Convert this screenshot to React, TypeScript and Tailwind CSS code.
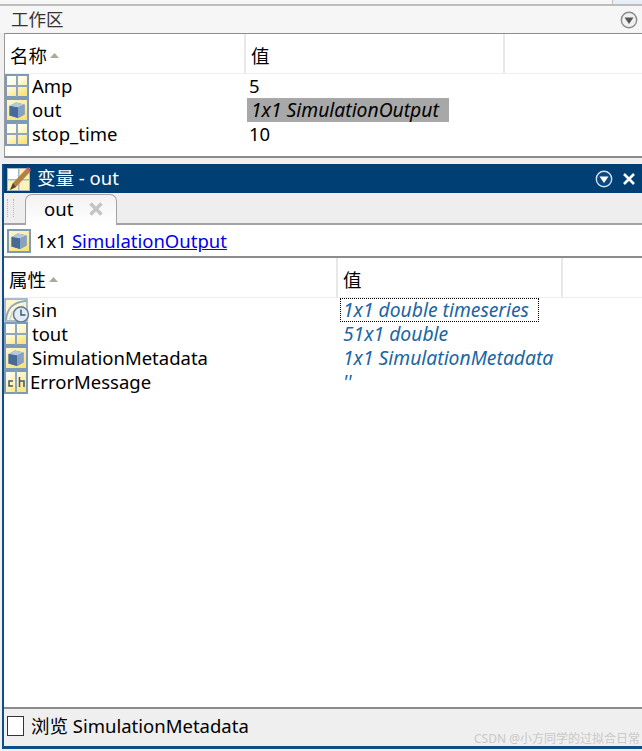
import React from "react";

const font = "font-['Noto_Sans','Noto_Sans_CJK_SC',sans-serif]";
const valueText = "text-[19.3px] italic leading-[22px]";

function GridIcon() {
  return (
    <svg width="24" height="24" viewBox="0 0 24 24" className="shrink-0">
      <defs>
        <linearGradient id="cellg" x1="0" y1="0" x2="0.6" y2="1">
          <stop offset="0" stopColor="#ffffff" />
          <stop offset="0.45" stopColor="#fffbe0" />
          <stop offset="1" stopColor="#fbe57e" />
        </linearGradient>
      </defs>
      <rect x="1" y="1" width="22" height="22" fill="url(#cellg)" stroke="#7f9ab5" strokeWidth="2" />
      <rect x="11" y="1" width="2" height="22" fill="#8fa7bd" />
      <rect x="1" y="11" width="22" height="2" fill="#8fa7bd" />
    </svg>
  );
}

function CubeIcon() {
  return (
    <svg width="24" height="24" viewBox="0 0 24 24" className="shrink-0">
      <defs>
        <linearGradient id="cubebg" x1="0" y1="0" x2="0.6" y2="1">
          <stop offset="0" stopColor="#fdf8d8" />
          <stop offset="1" stopColor="#f9e27a" />
        </linearGradient>
      </defs>
      <rect x="1" y="1" width="22" height="22" fill="url(#cubebg)" stroke="#7f9ab5" strokeWidth="2" />
      <path d="M4.5 8 L11 4.5 L19.5 6.5 L19.5 16.5 L13 20 L4.5 17.5 Z" fill="#5f83ad" />
      <path d="M4.5 8 L11 4.5 L19.5 6.5 L13 9.5 Z" fill="#b4c8de" />
      <path d="M13 9.5 L19.5 6.5 L19.5 16.5 L13 20 Z" fill="#86a1c2" />
      <path d="M4.5 8 L13 9.5 L13 20 L4.5 17.5 Z" fill="#486a96" />
    </svg>
  );
}

function TimeIcon() {
  return (
    <svg width="26" height="24" viewBox="0 0 26 24" className="shrink-0">
      <rect x="1" y="1" width="22" height="22" fill="#fdf6cf" stroke="#8fa7bd" strokeWidth="1.5" />
      <path d="M2 22 C3 10 9 4 22 3" fill="none" stroke="#8fa7bd" strokeWidth="2" />
      <path d="M6 22 C7 14 12 9 20 8" fill="none" stroke="#c9d4dc" strokeWidth="1.5" />
      <circle cx="17" cy="16.5" r="7.5" fill="#e4ebf3" stroke="#5c7c9e" strokeWidth="1.5" />
      <path d="M17 11.5 V17 H21.5" fill="none" stroke="#3d5a78" strokeWidth="1.5" />
    </svg>
  );
}

function CharIcon() {
  return (
    <svg width="24" height="24" viewBox="0 0 24 24" className="shrink-0">
      <defs>
        <linearGradient id="charg" x1="0" y1="0" x2="0.6" y2="1">
          <stop offset="0" stopColor="#ffffff" />
          <stop offset="1" stopColor="#fbe57e" />
        </linearGradient>
      </defs>
      <rect x="1" y="1" width="22" height="22" fill="url(#charg)" stroke="#7f9ab5" strokeWidth="2" />
      <rect x="11" y="1" width="2" height="22" fill="#8fa7bd" />
      <path d="M9 11 H5 V16 H9" fill="none" stroke="#44586c" strokeWidth="1.5" />
      <path d="M15.5 7 V17 M15.5 11 H20 V17" fill="none" stroke="#44586c" strokeWidth="1.5" />
    </svg>
  );
}

function PencilIcon() {
  return (
    <svg width="24" height="26" viewBox="0 0 24 26" className="shrink-0">
      <rect x="0.5" y="2.5" width="22" height="22" fill="#fdf3b8" stroke="#a9b8c6" />
      <rect x="1" y="3" width="10" height="10" fill="#ffffff" />
      <rect x="11" y="3" width="1.5" height="21" fill="#a9b8c6" />
      <rect x="1" y="13" width="21" height="1.5" fill="#a9b8c6" />
      <path d="M3 24 L6 17 L19 3 L23 6 L9 21 Z" fill="#b5813f" />
      <path d="M3 24 L6 17 L9 21 Z" fill="#5b4630" />
      <path d="M19 3 L21 1 L24 4 L23 6 Z" fill="#c0507a" />
    </svg>
  );
}

function PanelMenu({ dark }: { dark?: boolean }) {
  const c = dark ? "#ffffff" : "#555555";
  const bg = dark ? "#0b4a80" : "#f0f0f0";
  return (
    <svg width="18" height="18" viewBox="0 0 18 18" className="shrink-0">
      <circle cx="9" cy="9" r="7.7" fill={bg} stroke={dark ? "#d5e0ea" : "#8a8a8a"} strokeWidth="1.4" />
      <path d="M4.5 6.5 H13.5 L9 13 Z" fill={c} />
    </svg>
  );
}

function SortUp() {
  return (
    <svg width="9" height="5" viewBox="0 0 9 5" className="shrink-0">
      <path d="M4.5 0 L9 5 H0 Z" fill="#aaa99a" />
    </svg>
  );
}

function HeaderRow({ name, col1, col2, val }: { name: string; col1: string; col2: string; val: string }) {
  return (
    <div className="flex h-[40px] border-b border-[#eeeeee] bg-white text-black shrink-0">
      <div className={`${col1} flex items-center gap-[3px] pl-[5px] pt-[4px] border-r-2 border-[#e8e8e8] shrink-0`}>
        <span>{name}</span>
        <SortUp />
      </div>
      <div className={`${col2} flex items-center pl-[5px] pt-[4px] border-r-2 border-[#e8e8e8] shrink-0`}>
        <span>{val}</span>
      </div>
    </div>
  );
}

function Row({ icon, children }: { icon: React.ReactNode; children: React.ReactNode }) {
  return <div className="flex h-[24px] items-center leading-[22px]">{icon}{children}</div>;
}

export default function App() {
  return (
    <div className={`${font} relative w-[642px] h-[751px] overflow-hidden bg-[#f0f0f0] flex flex-col text-[18.5px] text-black`}>
      {/* top strip */}
      <div className="flex h-[6px] shrink-0 border-b-2 border-[#bdbdbd]">
        <div className="flex-1 bg-[#f6f6f6]" />
        <div className="w-[30px] bg-[#e8eef6] border-l border-[#bdbdbd]" />
      </div>

      {/* workspace */}
      <div className="flex items-center justify-between h-[27px] pl-[11px] pr-[4px] bg-[#f6f6f6] shrink-0 text-[#333333] text-[17.5px]">
        <span>工作区</span>
        <PanelMenu />
      </div>
      <div className="ml-[4px] h-[125px] shrink-0 flex flex-col bg-white border-t border-b-2 border-l border-[#8c8c8c] border-l-[#9a9a9a]">
        <HeaderRow name="名称" val="值" col1="w-[241px]" col2="w-[259px]" />
        <Row icon={<GridIcon />}>
          <span className="ml-[3px] w-[217px]">Amp</span>
          <span>5</span>
        </Row>
        <Row icon={<CubeIcon />}>
          <span className="ml-[3px] w-[215px]">out</span>
          <span className={`${valueText} h-[24px] w-[202px] bg-[#a8a8a8] pl-[4px] pt-[1px] whitespace-nowrap`}>1x1 SimulationOutput</span>
        </Row>
        <Row icon={<GridIcon />}>
          <span className="ml-[3px] w-[217px]">stop_time</span>
          <span>10</span>
        </Row>
      </div>

      <div className="h-[6px] shrink-0" />

      {/* variable editor */}
      <div className="ml-[2px] h-[585px] shrink-0 flex flex-col border-l-2 border-b-[3px] border-[#0f4c8a]">
        <div className="flex items-center h-[29px] shrink-0 bg-[#003f74] text-white pl-[3px] pr-[6px]">
          <PencilIcon />
          <span className="ml-[6px] flex-1 -mt-[2px]">变量 - out</span>
          <PanelMenu dark />
          <svg width="14" height="14" viewBox="0 0 14 14" className="ml-[9px] shrink-0">
            <path d="M2 2 L12 12 M12 2 L2 12" stroke="#ffffff" strokeWidth="2.6" />
          </svg>
        </div>

        {/* tab strip */}
        <div className="flex items-end h-[32px] shrink-0 bg-[#eeeeee] border-b-2 border-[#a3a3a3]">
          <div className="w-[7px] h-[18px] ml-[3px] mb-[6px] shrink-0 border-x border-dotted border-[#b5b5b5]" />
          <div className="ml-[11px] -mb-[2px] flex items-center h-[31px] w-[92px] pb-[2px] shrink-0 bg-gradient-to-b from-[#f2f2f2] to-white border border-b-0 border-[#a3a3a3] rounded-t-[7px] pl-[18px]">
            <span>out</span>
            <svg width="16" height="16" viewBox="0 0 16 16" className="ml-[15px] shrink-0">
              <path d="M2.5 2.5 L13.5 13.5 M13.5 2.5 L2.5 13.5" stroke="#c4c4c4" strokeWidth="3.4" />
            </svg>
          </div>
        </div>

        {/* info row */}
        <div className="flex items-center h-[33px] shrink-0 bg-white pl-[3px] border-b-2 border-[#8c8c8c]">
          <CubeIcon />
          <span className="ml-[5px]">1x1</span>
          <span className="ml-[5px] text-[#0000ee] underline">SimulationOutput</span>
        </div>

        {/* properties */}
        <div className="flex-1 min-h-0 bg-white flex flex-col">
          <HeaderRow name="属性" val="值" col1="w-[334px]" col2="w-[225px]" />
          <Row icon={<TimeIcon />}>
            <span className="ml-[2px] w-[308px]">sin</span>
            <span className={`${valueText} h-[24px] w-[199px] border border-dotted border-black pl-[2px] text-[#1a66a3] whitespace-nowrap`}>1x1 double timeseries</span>
          </Row>
          <Row icon={<GridIcon />}>
            <span className="ml-[4px] w-[311px]">tout</span>
            <span className={`${valueText} text-[#1a66a3]`}>51x1 double</span>
          </Row>
          <Row icon={<CubeIcon />}>
            <span className="ml-[4px] w-[311px]">SimulationMetadata</span>
            <span className={`${valueText} text-[#1a66a3]`}>1x1 SimulationMetadata</span>
          </Row>
          <Row icon={<CharIcon />}>
            <span className="ml-[2px] w-[313px]">ErrorMessage</span>
            <span className={`${valueText} text-[#1a66a3]`}>''</span>
          </Row>
        </div>

        {/* footer */}
        <div className="flex items-center h-[39px] shrink-0 bg-[#efefef] border-t-2 border-[#8c8c8c] pl-[3px] pb-[3px]">
          <div className="w-[17px] h-[20px] bg-white border border-[#333333] shrink-0" />
          <span className="ml-[7px]">浏览 SimulationMetadata</span>
        </div>
      </div>

      <div className="absolute right-[2px] bottom-[3px] text-[12px] text-[#c8c8c8] whitespace-nowrap">CSDN @小方同学的过拟合日常</div>
    </div>
  );
}
